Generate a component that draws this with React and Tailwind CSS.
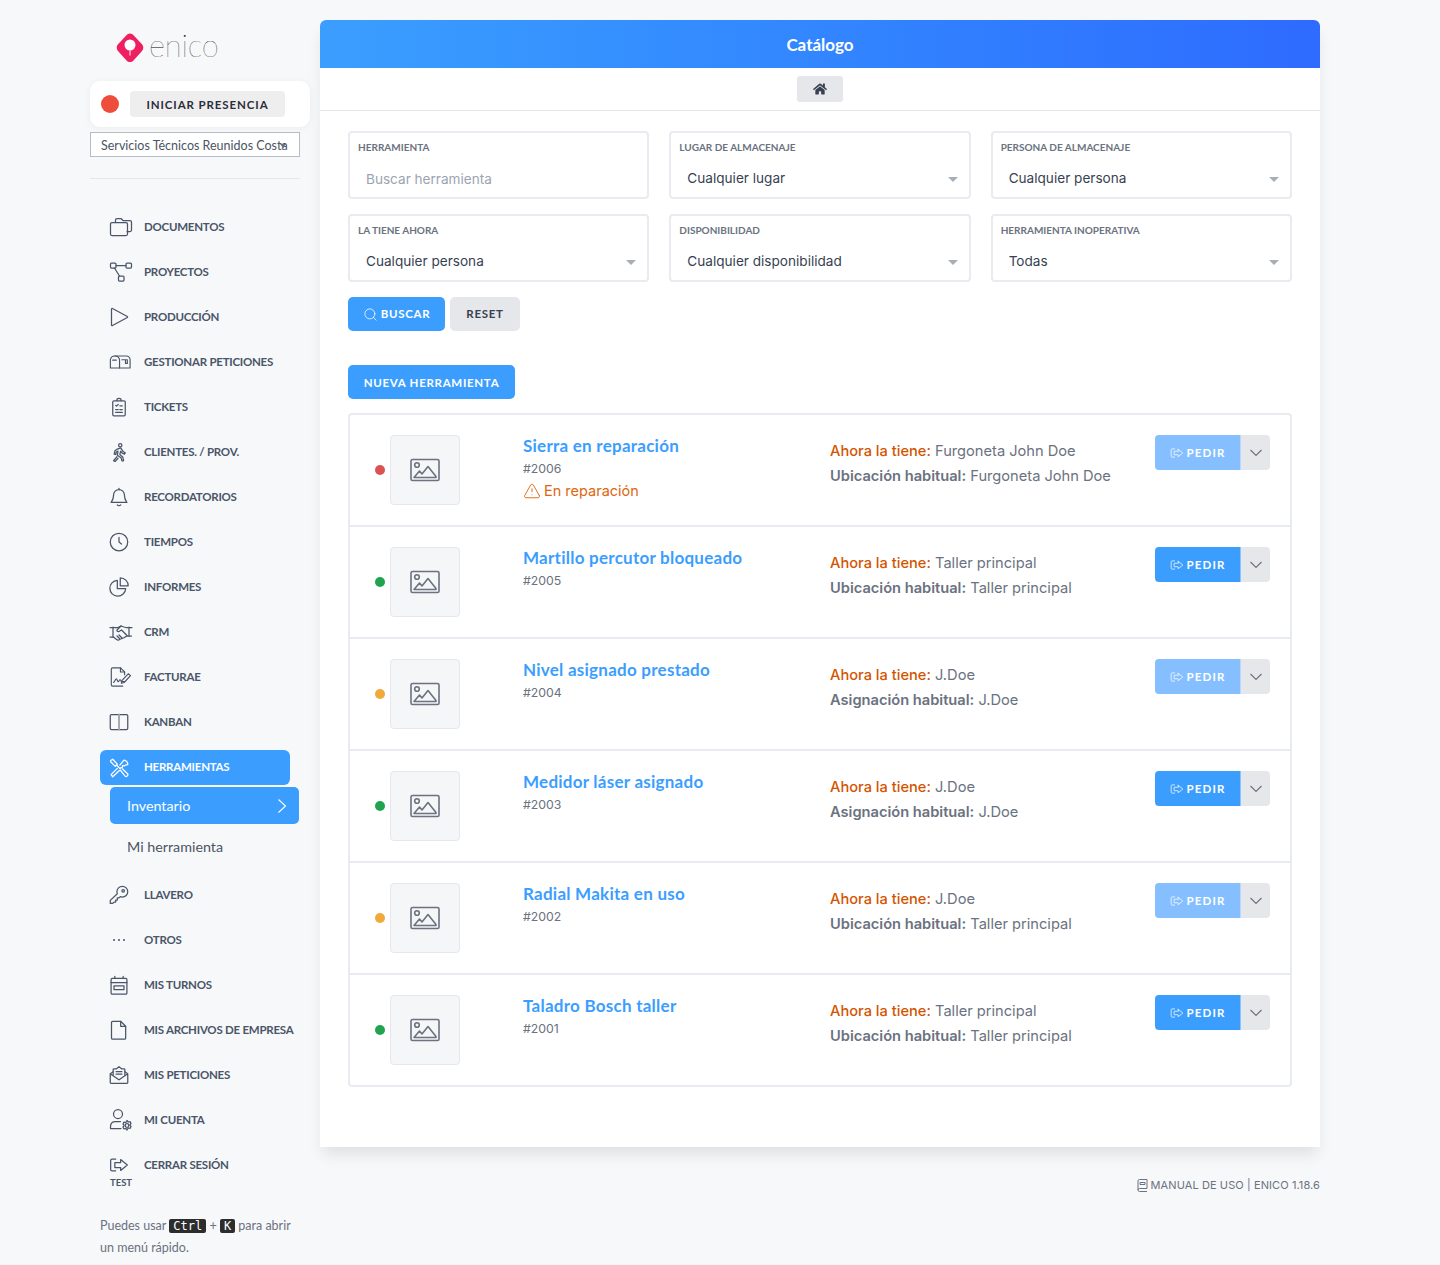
import React from 'react';
import { Search, TriangleAlert } from 'lucide-react';
import { FaHome } from 'react-icons/fa';

const SideIcon = ({ children, size = 20 }) => (
  <svg width={size} height={size} viewBox="0 0 24 24" fill="none" stroke="currentColor" strokeWidth={size < 22 ? 1.5 : 1.25} strokeLinecap="round" strokeLinejoin="round">
    {children}
  </svg>
);

const SignOutGlyph = ({ size = 24, className = '' }) => (
  <svg width={size} height={size} viewBox="0 0 24 24" fill="none" stroke="currentColor" strokeWidth={size < 20 ? 1.6 : 1.5} strokeLinecap="round" strokeLinejoin="round" className={className}>
    <path d="M8 5H3.500A1.500 1.500 0 0 0 2 6.500v11A1.500 1.500 0 0 0 3.500 19H8" />
    <path d="M14 5.500 22 12l-8 6.500V15H7V9h7z" />
  </svg>
);

const icons = {
  folders: <><path d="M6.500 7V5a1.500 1.500 0 0 1 1.500-1.500h4l2 2h7A1.500 1.500 0 0 1 22.500 7v8a1.500 1.500 0 0 1-1.500 1.500h-3" /><rect x="1.500" y="7.500" width="17" height="13" rx="1.500" /></>,
  nodes: <><rect x="1.500" y="3" width="5.500" height="5" rx="1" /><rect x="17" y="3" width="5.500" height="5" rx="1" /><rect x="9.500" y="16" width="5.500" height="5" rx="1" /><path d="M7 5.500h10M5.500 8l5 8" /></>,
  play: <path d="M3 2.500v19a.8.8 0 0 0 1.200.7L22 12.600a.7.7 0 0 0 0-1.200L4.200 1.800A.8.8 0 0 0 3 2.500z" />,
  mailbox: <><path d="M6.500 5.500h12a4 4 0 0 1 4.500 4v9H1.500v-9a5 5 0 0 1 5-4z" /><path d="M11.500 18.500V10a4.500 4.500 0 0 0-5-4.500M4 10h4M14 9.500h6v4h-2V10" /></>,
  tickets: <><rect x="4.500" y="4.500" width="15" height="18" rx="1.500" /><path d="M9.500 4.500V3.500a2.500 2 0 0 1 5 0v1M8 10l1 1 2-2M13 10.500h3M8 15h3M13 15h3M8 18.500h8" /></>,
  walker: <><circle cx="13.500" cy="3.800" r="2" /><path d="M10 8.500 14 7l3 4.500 2.500 1.500-1 1.500-3-1.500L14 11l-1 4 3.500 3 1 4.500h-2l-1-3.500L10 16l.8-5-2 1-.8 3-1.800-.5 1-4z" /><path d="m9.500 17.500-1.500 2-2.500 3 1.800 1 3.500-4" /></>,
  bell: <><path d="M12 3a6.500 6.500 0 0 0-6.500 6.500c0 5-1.500 6.500-3 9h19c-1.500-2.500-3-4-3-9A6.500 6.500 0 0 0 12 3z" /><path d="M12 1.500V3M10 21.500a2.500 1.500 0 0 0 4 0" /></>,
  clock: <><circle cx="12" cy="12" r="10.500" /><path d="M12 6.500V12l3 2.500" /></>,
  pie: <><path d="M10 4a9.500 9.500 0 1 0 10 10H10z" /><path d="M13.500 1v9.500H23A9.500 9.500 0 0 0 13.500 1z" /></>,
  handshake: <><path d="M4 7.500h5l3-1.500 3 1 2 .5h6M1 7.500h3M1 17h3.500l3 2.500c1 .8 2.500.8 3 0l5-2 2-1.500h5" /><path d="m12 6-4 4c-.5 1 .8 2 2 1.500l2.500-1.500 5.500 5.500M4 7v10M20 7v9" /><path d="m10 15 3 3M8 16l2.500 2.500" /></>,
  sign: <><path d="M15 22H4a1.500 1.500 0 0 1-1.500-1.500v-17A1.500 1.500 0 0 1 4 2h8.500L17 6.500v3" /><path d="M12.500 2v4.500H17" /><path d="M5 18c1.500-1 2-4 3-4s1 3 2 3 1-2 2-2 1 2 2 2h3" /><path d="m14 16 7-7.500 2.500 2L16.500 18l-3 .8z" /></>,
  kanban: <><rect x="1.500" y="3" width="21" height="18" rx="1.500" /><path d="M12 3v18" strokeWidth="2.200" stroke="#9ca3af" /></>,
  tools: <><path d="m2 3 2.500-1.500 5.500 6-2.500 2.500L2 4.500z" /><path d="m9.500 9 4 4M13 8.500l5-6a5 5 0 0 1 4.500 5.500l-3 .5-1 1-2-.5-.5 2-3 1.500" /><path d="m10 12.500-7.500 7.500 2 2.500 8-7.500M14 15l5 6.500a2 2 0 0 0 3-3l-6-5.500" /></>,
  key: <><path d="M16 1.500a6.500 6.500 0 0 1 0 13c-1 0-1.500 0-2.500-.5l-1.500 1.500h-2V18H8v2.500H6l-1.500 1.500h-3v-3.500l8.500-8c-.5-1-.5-1.500-.5-2.500A6.500 6.500 0 0 1 16 1.500z" /><circle cx="17" cy="7" r="1.500" /></>,
  dots: <g fill="currentColor" stroke="none"><circle cx="6" cy="12" r="1.200" /><circle cx="12" cy="12" r="1.200" /><circle cx="18" cy="12" r="1.200" /></g>,
  calendar: <><rect x="2.500" y="4" width="19" height="19" rx="1.500" /><path d="M2.500 9h19M7 1.500V4M17 1.500V4" /><rect x="6" y="13" width="12" height="4.500" /></>,
  file: <><path d="M4.500 1.500h9.500l6 6v14a1.500 1.500 0 0 1-1.500 1.500h-14A1.500 1.500 0 0 1 3 21.500V3a1.500 1.500 0 0 1 1.500-1.500z" /><path d="M14 1.500V7.500h6" /></>,
  envelope: <><path d="M1.500 10.500V21a1 1 0 0 0 1 1h19a1 1 0 0 0 1-1V10.500L19 8M5 8l-3.500 2.500 9.500 6.500a1.500 1.500 0 0 0 2 0l9.500-6.500" /><path d="M5 12V5.500a1 1 0 0 1 1-1h3L12 2l3 2.500h3a1 1 0 0 1 1 1V12M8.500 8h7M8.500 11h7" /></>,
  user: <><circle cx="9" cy="6" r="4.500" /><path d="M1.500 20.500v-2c0-3 2-5 5-5h5M1.500 20.500H12" /><circle cx="18" cy="17.500" r="1.800" /><path d="M18 12.500l1.200 1.500 2-.3.8 1.800-1.200 1.500 1.200 1.500-.8 1.800-2-.3L18 22l-1.200-1.500-2 .3-.8-1.800 1.200-1.500-1.200-1.500.8-1.800 2 .3z" /></>,
};

const menu = [
  ['DOCUMENTOS', 'folders', 24],
  ['PROYECTOS', 'nodes', 24],
  ['PRODUCCIÓN', 'play', 20],
  ['GESTIONAR PETICIONES', 'mailbox', 22],
  ['TICKETS', 'tickets', 20],
  ['CLIENTES. / PROV.', 'walker', 20],
  ['RECORDATORIOS', 'bell', 20],
  ['TIEMPOS', 'clock', 20],
  ['INFORMES', 'pie', 20],
  ['CRM', 'handshake', 24],
  ['FACTURAE', 'sign', 22],
  ['KANBAN', 'kanban', 20],
];

const menuBottom = [
  ['LLAVERO', 'key', 20],
  ['OTROS', 'dots', 20],
  ['MIS TURNOS', 'calendar', 20],
  ['MIS ARCHIVOS DE EMPRESA', 'file', 20],
  ['MIS PETICIONES', 'envelope', 20],
  ['MI CUENTA', 'user', 24],
];

const filters = [
  ['HERRAMIENTA', 'Buscar herramienta', true],
  ['LUGAR DE ALMACENAJE', 'Cualquier lugar'],
  ['PERSONA DE ALMACENAJE', 'Cualquier persona'],
  ['LA TIENE AHORA', 'Cualquier persona'],
  ['DISPONIBILIDAD', 'Cualquier disponibilidad'],
  ['HERRAMIENTA INOPERATIVA', 'Todas'],
];

const tools = [
  { name: 'Sierra en reparación', id: '#2006', dot: 'bg-[#dc5252]', now: 'Furgoneta John Doe', label: 'Ubicación habitual:', home: 'Furgoneta John Doe', off: true, repair: true },
  { name: 'Martillo percutor bloqueado', id: '#2005', dot: 'bg-[#22a350]', now: 'Taller principal', label: 'Ubicación habitual:', home: 'Taller principal' },
  { name: 'Nivel asignado prestado', id: '#2004', dot: 'bg-[#f2a93b]', now: 'J.Doe', label: 'Asignación habitual:', home: 'J.Doe', off: true },
  { name: 'Medidor láser asignado', id: '#2003', dot: 'bg-[#22a350]', now: 'J.Doe', label: 'Asignación habitual:', home: 'J.Doe' },
  { name: 'Radial Makita en uso', id: '#2002', dot: 'bg-[#f2a93b]', now: 'J.Doe', label: 'Ubicación habitual:', home: 'Taller principal', off: true },
  { name: 'Taladro Bosch taller', id: '#2001', dot: 'bg-[#22a350]', now: 'Taller principal', label: 'Ubicación habitual:', home: 'Taller principal' },
];

const titleFont = "font-['Lato',sans-serif]";

const MenuItem = ({ label, icon, size }) => (
  <div className="h-[45px] flex items-center pl-[19px] text-[#4a5568]">
    <div className="w-[35px] shrink-0 flex items-center">
      <SideIcon size={size}>{icons[icon]}</SideIcon>
    </div>
    <span className={`${titleFont} text-[11.5px] tracking-[-0.25px] font-bold`}>{label}</span>
  </div>
);

const Sidebar = () => (
  <aside className={`w-[230px] ml-[90px] shrink-0 ${titleFont}`}>
    <div className="h-[81px] pt-[33px] pl-[26px] flex items-start">
      <svg width="28" height="30" viewBox="0 0 28 30" className="shrink-0">
        <path d="M14 .5c1.500 0 2.500.8 3.500 1.800l8.500 9c1.700 1.800 1.700 4.900 0 6.700l-8.500 9.500c-2 2-5 2-7 0L2 18c-1.700-1.800-1.700-4.900 0-6.700l8.500-9C11.500 1.300 12.500.5 14 .5z" fill="#f01f5f" />
        <circle cx="14" cy="12" r="5.500" fill="#fff" />
        <path d="M14 17.500v5" stroke="#fff" strokeWidth="1" />
      </svg>
      <span className="ml-[5px] -mt-[7px] text-[31px] leading-[38px] font-thin text-black tracking-[-0.2px]">enico</span>
    </div>
    <div className="w-[220px] h-[46px] bg-white rounded-[10px] shadow-[0_1px_8px_rgba(0,0,0,0.05)] flex items-center pl-[11px]">
      <span className="w-[18px] h-[18px] rounded-full bg-[#ee4d3d]" />
      <span className="ml-[11px] w-[155px] h-[26px] pt-[2px] rounded-[4px] bg-[#eeeeee] flex items-center justify-center text-[11.500px] font-bold tracking-[0.9px] text-[#2d2d3a]">INICIAR PRESENCIA</span>
    </div>
    <div className="relative mt-[5px] w-[210px] h-[25px] border border-[#b6bcc6] bg-white flex items-center pl-[10px] pt-[3px] text-[12.500px] text-[#4b5563] overflow-hidden whitespace-nowrap">
      Servicios Técnicos Reunidos Costa
      <span className="absolute right-[13px] top-[11px] w-0 h-0 border-x-[3px] border-x-transparent border-t-[4px] border-t-[#6b7280]" />
    </div>
    <div className="mt-[21px] w-[210px] border-t border-[#e5e7eb]" />
    <nav className="mt-[25px]">
      {menu.map(([label, icon, size]) => <MenuItem key={label} label={label} icon={icon} size={size} />)}
      <div className="ml-[10px] w-[190px] h-[35px] rounded-[6px] bg-[#3b9eff] text-white flex items-center pl-[9px] mt-[6px]">
        <div className="w-[35px] shrink-0 flex items-center"><SideIcon size={20}>{icons.tools}</SideIcon></div>
        <span className="text-[11.500px] tracking-[-0.25px] font-bold pb-[1px]">HERRAMIENTAS</span>
      </div>
      <div className="ml-[20px] mt-[2px] w-[189px] h-[37px] rounded-[5px] bg-[#3b9eff] text-white flex items-center justify-between pl-[17px] pr-[12px] text-[14.300px]">
        Inventario
        <svg width="10" height="16" viewBox="0 0 10 16" fill="none" stroke="currentColor" strokeWidth="1.100"><path d="m1.500 1.500 7 6.500-7 6.500" /></svg>
      </div>
      <div className="ml-[37px] h-[45px] flex items-center text-[14.300px] text-[#4b5563]">Mi herramienta</div>
      <div className="h-[3px]" />
      {menuBottom.map(([label, icon, size]) => <MenuItem key={label} label={label} icon={icon} size={size} />)}
      <div className="h-[45px] flex items-center pl-[19px] text-[#4a5568]">
        <div className="w-[35px] shrink-0 flex items-center"><SignOutGlyph size={20} /></div>
        <span className="text-[11.500px] tracking-[-0.25px] font-bold">CERRAR SESIÓN</span>
      </div>
    </nav>
    <div className="-mt-[11px] pl-[20px] text-[9.500px] font-bold leading-[14px] text-[#4a5568]">TEST</div>
    <div className="mt-[25px] pl-[10px] w-[220px] text-[12.500px] leading-[21px] text-[#6b7280]">
      Puedes usar{' '}
      <kbd className="font-['DejaVu_Sans_Mono',monospace] text-[12px] bg-[#2d2d2d] text-white rounded-[2px] px-[4px]">Ctrl</kbd>
      {' '}+{' '}
      <kbd className="font-['DejaVu_Sans_Mono',monospace] text-[12px] bg-[#2d2d2d] text-white rounded-[2px] px-[4px]">K</kbd>
      {' '}para abrir
      <br />
      un menú rápido.
    </div>
  </aside>
);

const FilterBox = ({ label, value, placeholder }) => (
  <div className="h-[68px] bg-white border-2 border-[#e8ebf0] rounded-[4px] pl-[8px] pr-[11px] pt-[8px]">
    <div className={`${titleFont} text-[10px] font-bold leading-[13px] text-[#6b7280]`}>{label}</div>
    <div className={`pl-[8px] flex items-center justify-between ${placeholder ? 'mt-[15px]' : 'mt-[14px]'}`}>
      <span className={`text-[13.600px] leading-[20px] ${placeholder ? 'text-[#9ca3af]' : 'text-[#374151]'}`}>{value}</span>
      {!placeholder && <span className="mt-[3px] w-0 h-0 border-x-[5px] border-x-transparent border-t-[5px] border-t-[#a8aeb8]" />}
    </div>
  </div>
);

const ToolRow = ({ tool }) => (
  <div className="h-[112px] border-b-2 last:border-b-0 last:h-[110px] border-[#e8ebf0] flex pl-[25px] pt-[20px]">
    <div className="w-[10px] h-[70px] flex items-center">
      <span className={`w-[10px] h-[10px] rounded-full ${tool.dot}`} />
    </div>
    <div className="ml-[5px] w-[70px] h-[70px] rounded-[4px] bg-[#f5f6f8] border border-[#e5e7eb] flex items-center justify-center text-[#6b7280]">
      <svg width="30" height="24" viewBox="0 0 30 24" fill="none" stroke="currentColor" strokeWidth="1.600" strokeLinejoin="round">
        <rect x="1" y="1.500" width="28" height="21" rx="1.500" />
        <circle cx="7" cy="7" r="2.300" />
        <path d="M4 19.500 9.500 13l2.500 3 6-7.500 8 10v1z" />
      </svg>
    </div>
    <div className="ml-[63px] w-[307px] -mt-[1px]">
      <div className={`${titleFont} text-[17px] tracking-[0.25px] font-bold leading-[24px] text-[#3b9eff]`}>{tool.name}</div>
      <div className="mt-[2px] text-[12.300px] leading-[18px] text-[#6b7280]">{tool.id}</div>
      {tool.repair && (
        <div className="mt-[3px] flex items-center text-[14.500px] leading-[20px] text-[#e0660f]">
          <TriangleAlert size={18} strokeWidth={1.25} className="mr-[3px]" />
          En reparación
        </div>
      )}
    </div>
    <div className="w-[325px] text-[14.650px] leading-[25px] text-[#6b7280] -mt-[2px] pt-[6px]">
      <div><span className="font-medium text-[#d35400]">Ahora la tiene:</span> {tool.now}</div>
      <div><span className="font-semibold">{tool.label}</span> {tool.home}</div>
    </div>
    <div className="flex h-[35px]">
      <div className={`w-[86px] rounded-l-[4px] flex items-center justify-center text-white text-[11.500px] font-bold tracking-[1.100px] border-r border-[#ffffff66] ${tool.off ? 'bg-[#85bfff]' : 'bg-[#3b9eff]'} ${titleFont}`}>
        <SignOutGlyph size={14} className="mr-[3px] opacity-80" />
        PEDIR
      </div>
      <div className="w-[29px] rounded-r-[4px] bg-[#e5e7eb] flex items-center justify-center text-[#6b7280]">
        <svg width="14" height="8" viewBox="0 0 14 8" fill="none" stroke="currentColor" strokeWidth="1.100"><path d="m1.500 1 5.500 5.500L12.500 1" /></svg>
      </div>
    </div>
  </div>
);

export default function App() {
  return (
    <div className="bg-[#f7f8fa] flex font-['Inter',sans-serif] overflow-hidden h-[1265px]">
      <Sidebar />
      <main className="w-[1000px] pt-[20px]">
        <div className="bg-white shadow-[0_10px_15px_-3px_rgba(0,0,0,0.1)] h-[1127px]">
          <div className={`h-[48px] pt-[1px] rounded-t-[6px] bg-gradient-to-r from-[#3b9eff] to-[#2e6bff] flex items-center justify-center text-white text-[17px] font-bold ${titleFont}`}>Catálogo</div>
          <div className="h-[43px] border-b border-[#e5e7eb] flex justify-center pt-[8px]">
            <div className="w-[46px] h-[26px] rounded-[3px] bg-[#e5e7eb] flex items-center justify-center text-[#374151]">
              <FaHome size={14} />
            </div>
          </div>
          <div className="px-[28px] pt-[20px]">
            <div className="grid grid-cols-3 gap-x-[20px] gap-y-[15px]">
              {filters.map(([label, value, placeholder]) => (
                <FilterBox key={label} label={label} value={value} placeholder={placeholder} />
              ))}
            </div>
            <div className={`mt-[15px] flex gap-[5px] ${titleFont}`}>
              <div className="w-[97px] h-[34px] rounded-[5px] bg-[#3b9eff] text-white flex items-center justify-center text-[11.500px] font-bold tracking-[0.7px]">
                <Search size={15} strokeWidth={1.25} className="mr-[3px]" />
                BUSCAR
              </div>
              <div className="w-[70px] h-[34px] rounded-[5px] bg-[#e5e7eb] text-[#374151] flex items-center justify-center text-[11.500px] font-bold tracking-[0.7px]">RESET</div>
            </div>
            <div className={`mt-[34px] w-[167px] h-[34px] pt-[1px] rounded-[5px] bg-[#3b9eff] text-white flex items-center justify-center text-[11.500px] font-bold tracking-[0.7px] ${titleFont}`}>NUEVA HERRAMIENTA</div>
            <div className="mt-[14px] bg-white border-2 border-[#e8ebf0] rounded-[4px]">
              {tools.map((tool) => <ToolRow key={tool.id} tool={tool} />)}
            </div>
          </div>
        </div>
        <div className="mt-[30px] flex items-center justify-end text-[11px] text-[#6b7280] tracking-[0.1px]">
          <svg width="11" height="13" viewBox="0 0 11 13" fill="none" stroke="currentColor" strokeWidth="1" className="mr-[3px]">
            <path d="M1 11V2A1.500 1.500 0 0 1 2.500.5H10v9H2.500A1.500 1.500 0 0 0 1 11a1.500 1.500 0 0 0 1.500 1.500H10" />
            <path d="M3 3.500h5v2H3z" />
          </svg>
          MANUAL DE USO | ENICO 1.18.6
        </div>
      </main>
    </div>
  );
}
